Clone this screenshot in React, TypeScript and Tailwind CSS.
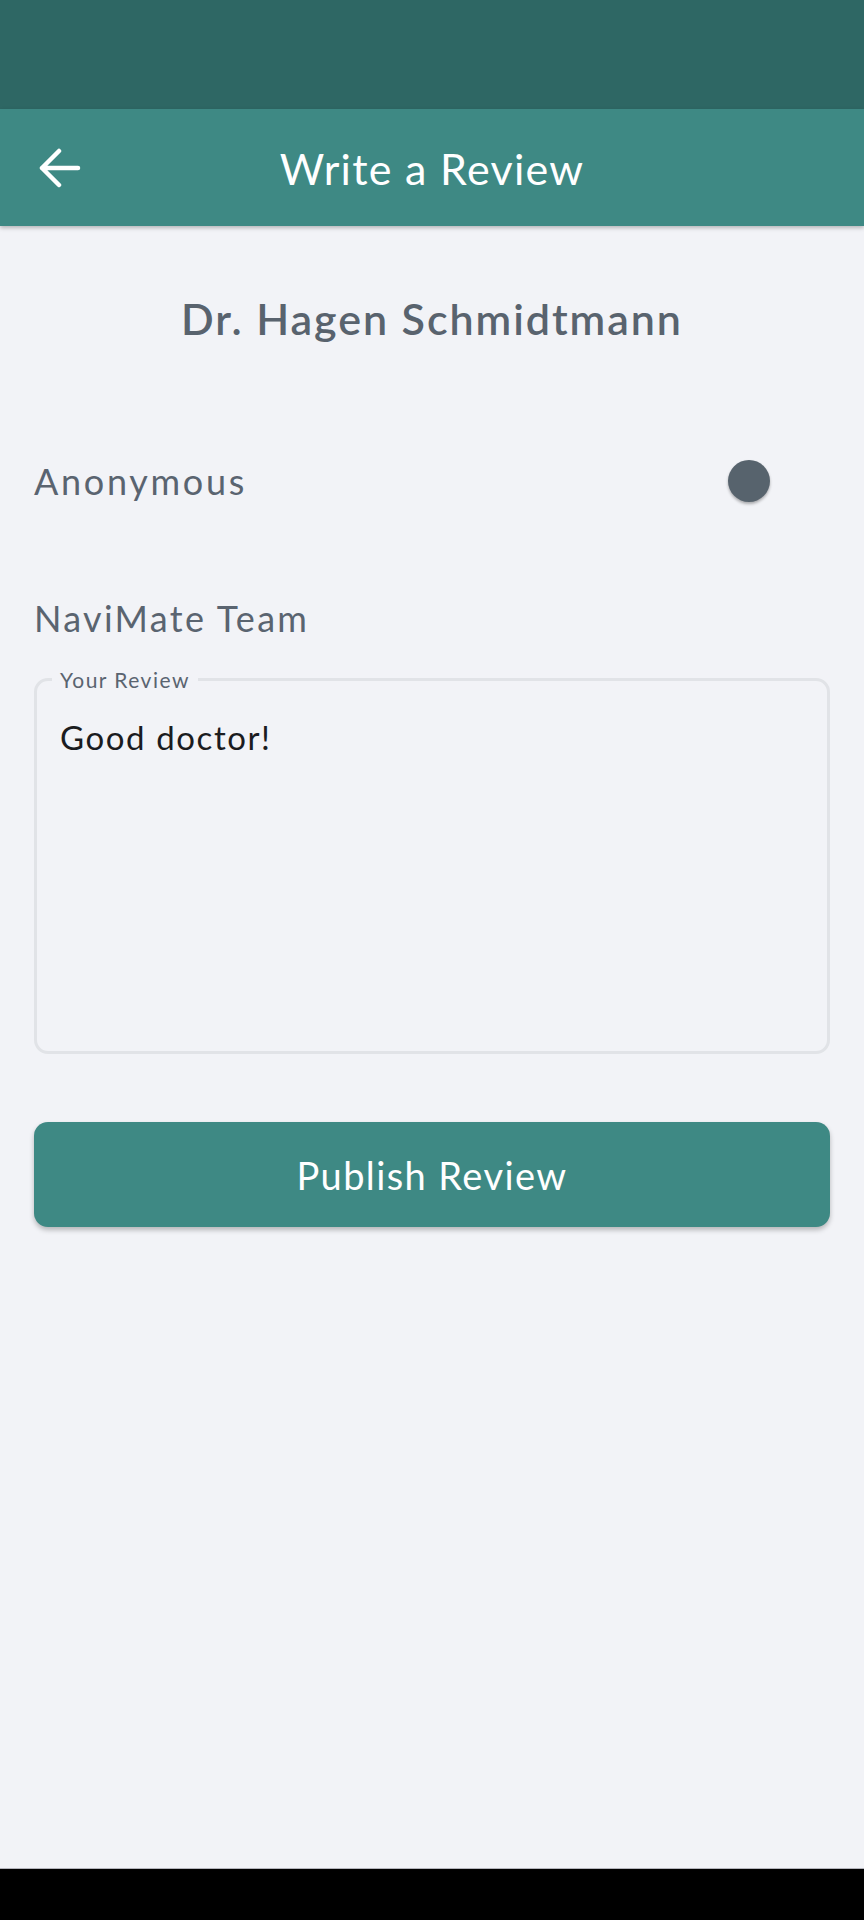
export default function App() {
  return (
    <div
      className="min-h-[1920px] flex flex-col bg-[#f2f3f7]"
      style={{ fontFamily: "Lato, 'Open Sans', sans-serif" }}
    >
      {/* status bar */}
      <div className="h-[109px] bg-[#2e6764]" />

      {/* app bar */}
      <header className="h-[117px] bg-[#3e8984] grid grid-cols-[1fr_auto_1fr] items-center shadow-[0_2px_4px_rgba(0,0,0,0.25)] relative z-10">
        <div className="pl-[38px] flex items-center">
          <svg width="43" height="40" viewBox="0 0 43 40" fill="none">
            <path
              d="M40 20 H4 M21 3 L4 20 L21 37"
              stroke="white"
              strokeWidth="4.5"
              strokeLinecap="round"
              strokeLinejoin="round"
            />
          </svg>
        </div>
        <h1 className="text-[43px] leading-none tracking-[0.03em] text-white pt-[2px]">Write a Review</h1>
        <div />
      </header>

      <main className="flex-1 px-[34px]">
        <p className="mt-[71px] text-center text-[43px] leading-none font-semibold tracking-[0.045em] text-[#59636e]">
          Dr. Hagen Schmidtmann
        </p>

        <div className="mt-[120px] h-[42px] flex items-center justify-between">
          <span className="text-[36px] leading-none tracking-[0.075em] text-[#5a6470]">Anonymous</span>
          <span className="mr-[60px] w-[42px] h-[42px] rounded-full bg-[#57636d] shadow-[0_2px_3px_rgba(0,0,0,0.3)]" />
        </div>

        <p className="mt-[98px] text-[36px] leading-none tracking-[0.064em] text-[#5a6470]">NaviMate Team</p>

        <fieldset className="mt-[33px] h-[385px] border-[3px] border-[#e1e3e7] rounded-[14px] px-[23px]">
          <legend className="-ml-2 px-2 text-[21px] leading-none tracking-[0.07em] text-[#5a6470]">Your Review</legend>
          <p className="pt-[31px] text-[33px] leading-none tracking-[0.048em] text-[#1b1c1f]">Good doctor!</p>
        </fieldset>

        <button className="mt-[68px] w-full h-[105px] rounded-[14px] bg-[#3e8984] text-white text-[38px] leading-none tracking-[0.037em] shadow-[0_3px_5px_rgba(0,0,0,0.25)]">
          Publish Review
        </button>
      </main>

      {/* navigation bar */}
      <div className="h-[52px] bg-black border-t border-[#b4b4bc]" />
    </div>
  );
}
